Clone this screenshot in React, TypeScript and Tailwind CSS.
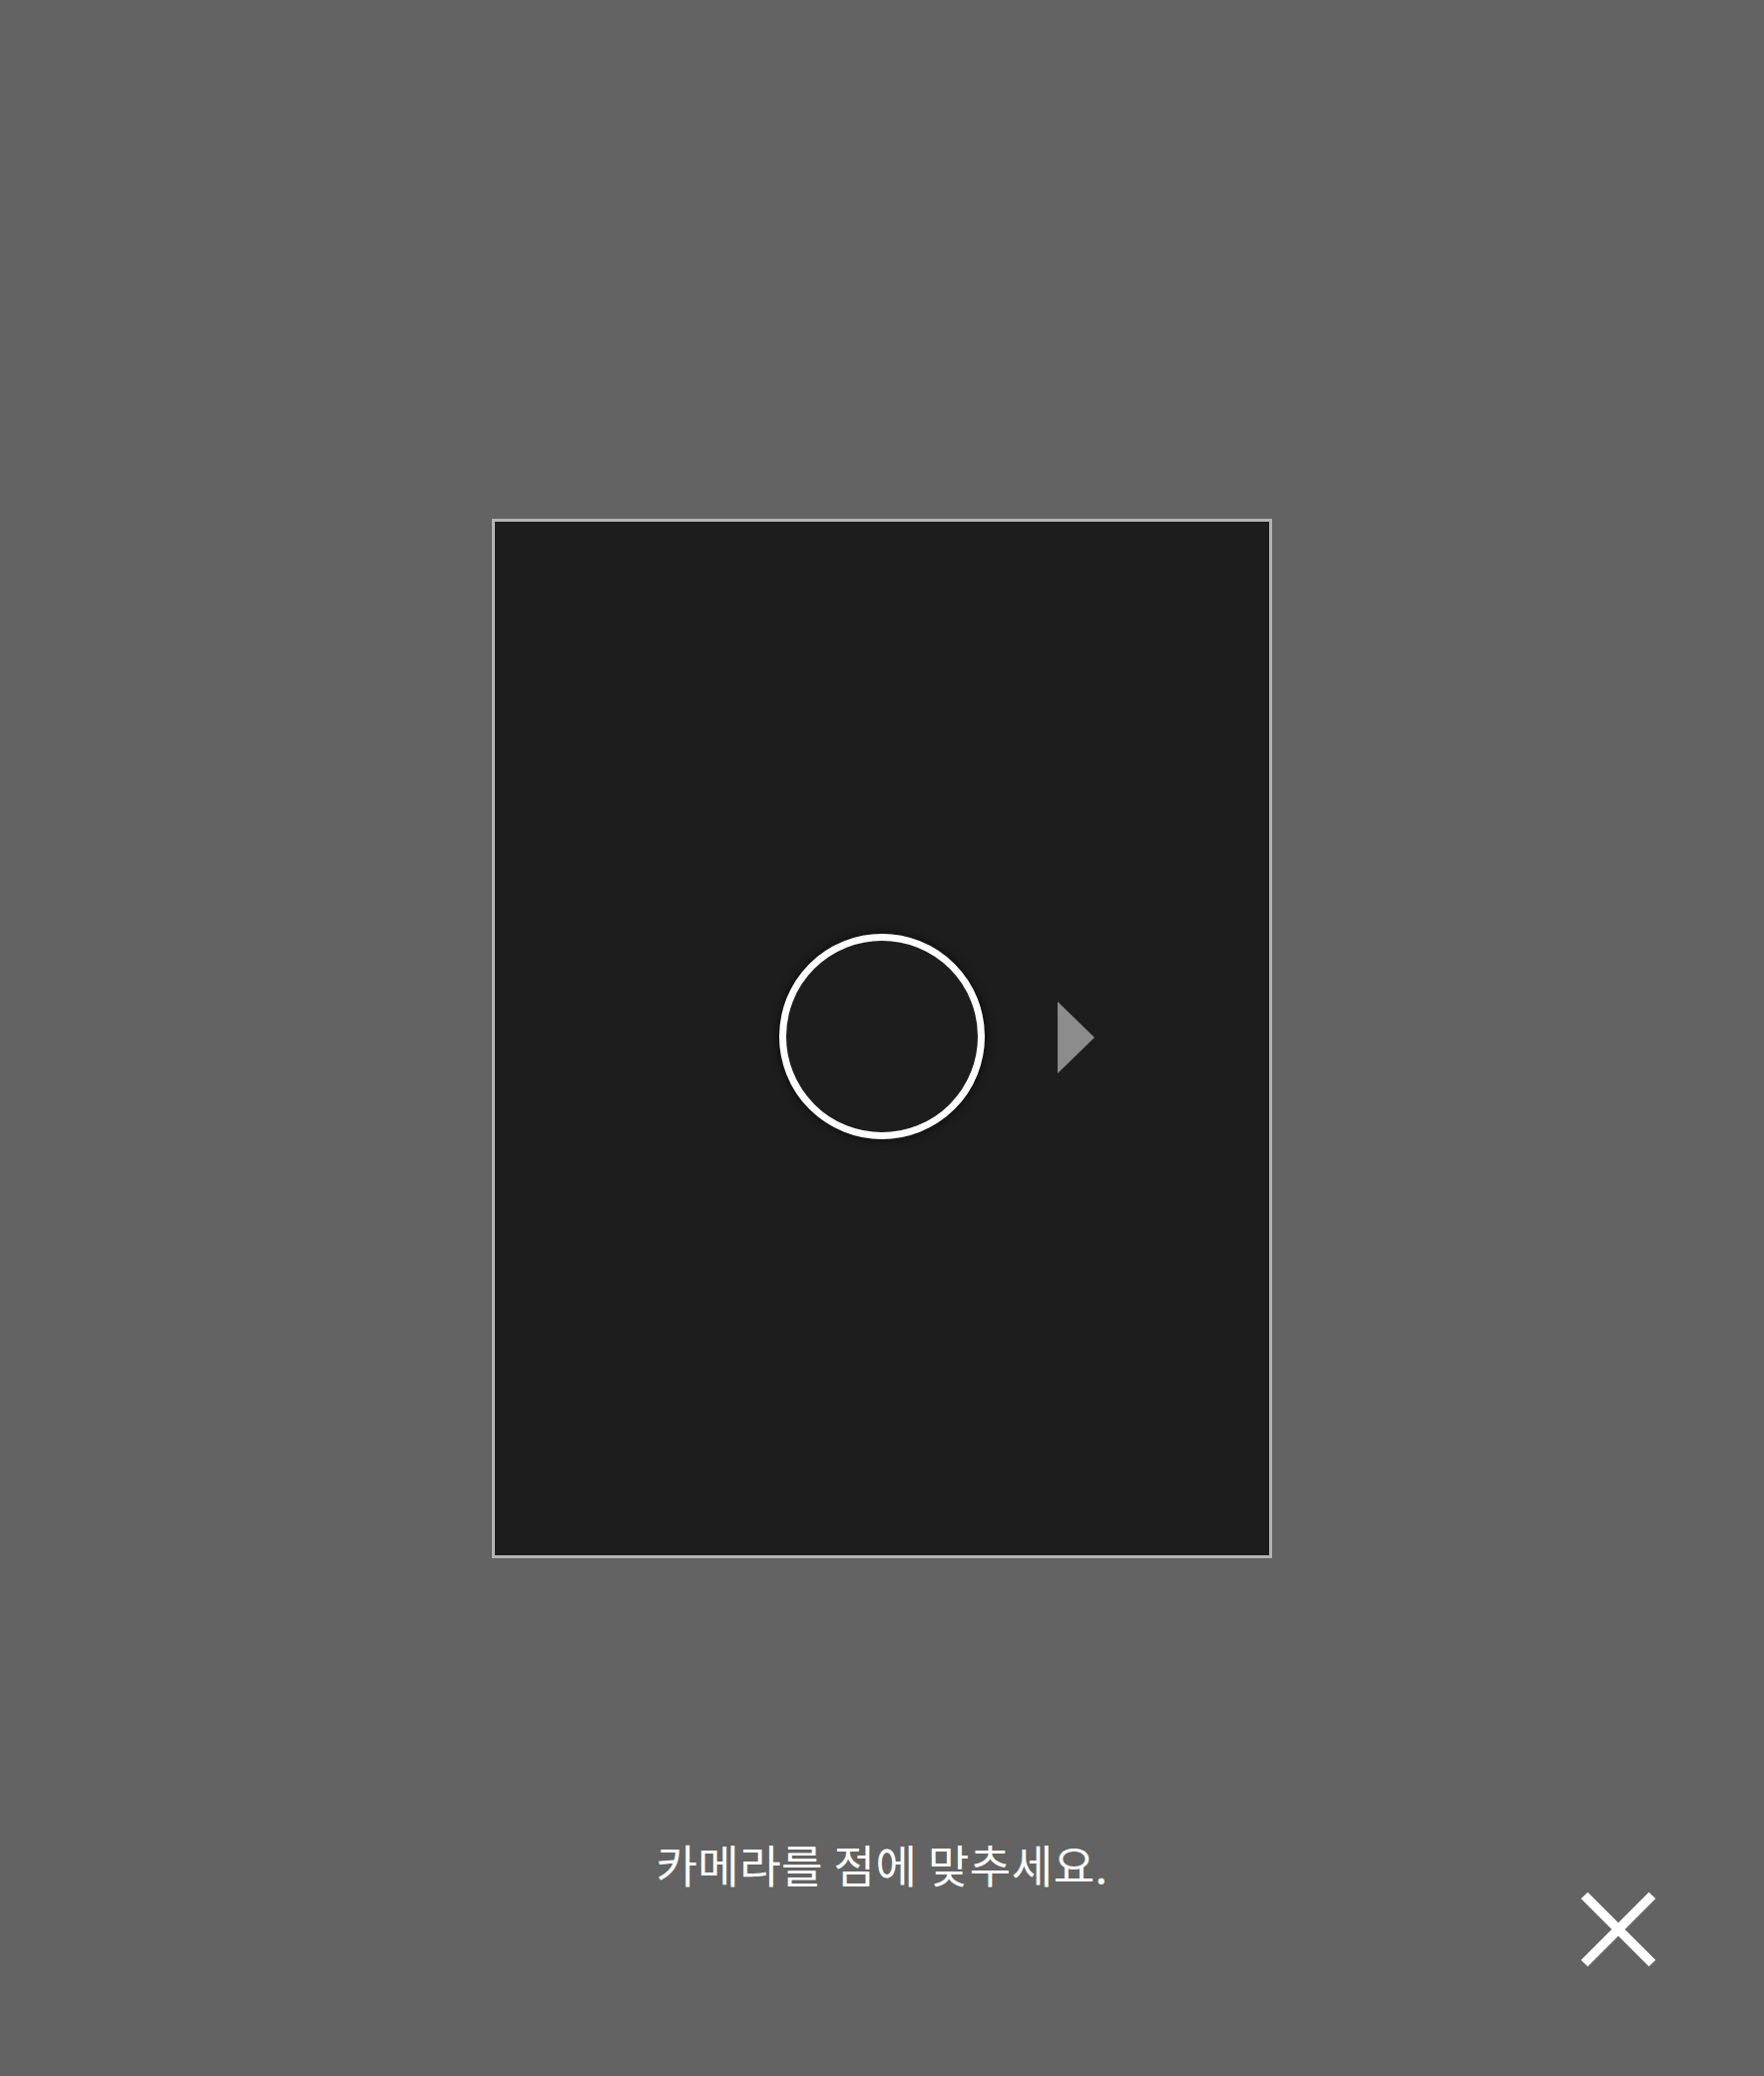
export default function App() {
  return (
    <div
      className="relative flex h-[2081px] w-[1768px] flex-col items-center bg-[#636363]"
      style={{ fontFamily: '"Noto Sans CJK KR", "Noto Sans", sans-serif' }}
    >
      {/* camera frame */}
      <div className="mt-[520px] flex h-[1042px] w-[782px] items-center justify-center border-[3px] border-[#b4b4b4] bg-[#1d1d1d]">
        <div className="relative -mt-[4px]">
          <div className="h-[206px] w-[206px] rounded-full border-[7px] border-white shadow-[0_0_10px_rgba(0,0,0,0.7)]" />
          <svg
            className="absolute left-[279px] top-[68px]"
            width="38"
            height="72"
            viewBox="0 0 38 72"
          >
            <polygon points="0,0 37,36 0,72" fill="#8c8c8c" />
          </svg>
        </div>
      </div>

      <p className="mt-[284px] text-[45px] font-normal leading-none tracking-[0.5px] text-white">카메라를 점에 맞추세요.</p>

      <button className="absolute right-[108px] top-[1896px] h-[76px] w-[76px]" aria-label="close">
        <svg width="76" height="76" viewBox="0 0 76 76">
          <path d="M4 4 L72 72 M72 4 L4 72" stroke="white" strokeWidth="9.5" strokeLinecap="butt" />
        </svg>
      </button>
    </div>
  );
}
